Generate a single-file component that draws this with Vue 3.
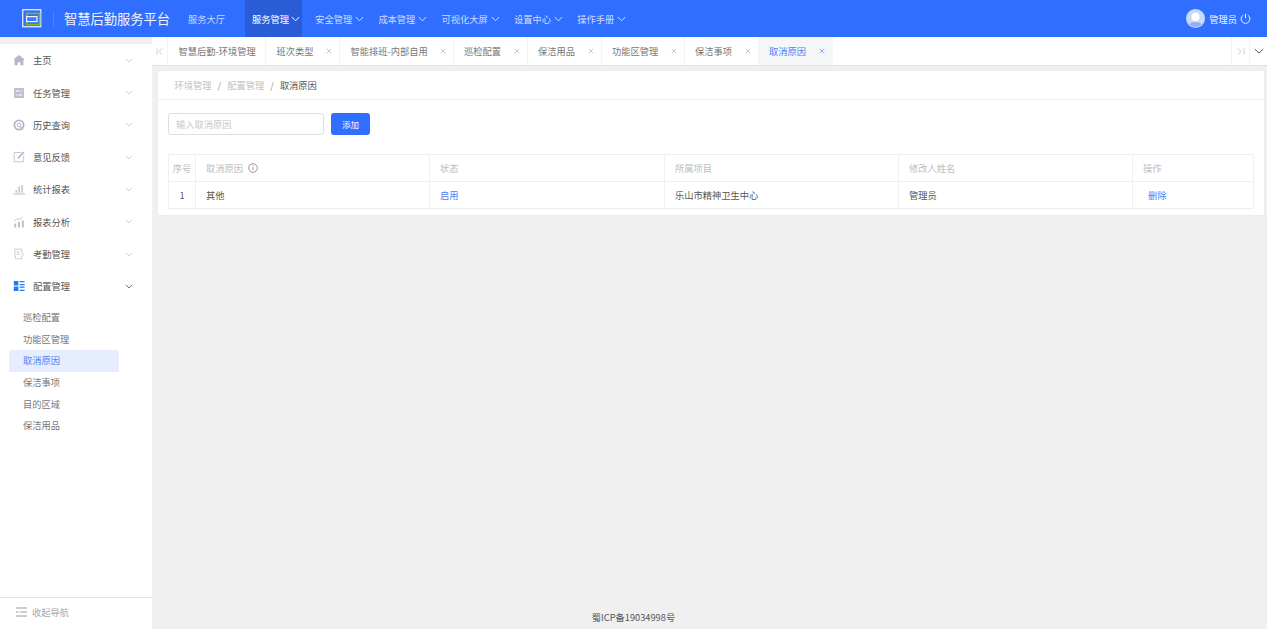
<script setup>
const navs = [
  { t: '服务管理', active: true },
  { t: '安全管理' },
  { t: '成本管理' },
  { t: '可视化大屏' },
  { t: '设置中心' },
  { t: '操作手册' }
]
const menus = [
  { t: '主页', i: 'home' },
  { t: '任务管理', i: 'task' },
  { t: '历史查询', i: 'history' },
  { t: '意见反馈', i: 'edit' },
  { t: '统计报表', i: 'stat' },
  { t: '报表分析', i: 'analysis' },
  { t: '考勤管理', i: 'attend' },
  { t: '配置管理', i: 'config', open: true }
]
const subs = ['巡检配置', '功能区管理', '取消原因', '保洁事项', '目的区域', '保洁用品']
const tabs = [
  { t: '智慧后勤-环境管理', noClose: true, w: 98 },
  { t: '班次类型', w: 74 },
  { t: '智能排班-内部自用', w: 113.5 },
  { t: '巡检配置', w: 74 },
  { t: '保洁用品', w: 74 },
  { t: '功能区管理', w: 83 },
  { t: '保洁事项', w: 74 },
  { t: '取消原因', active: true, w: 74.5 }
]
</script>

<template>
  <div class="page">
    <header class="top">
      <div class="logo">
        <svg width="20" height="20" viewBox="0 0 20 20">
          <rect x="0.7" y="0.7" width="18" height="17" fill="none" stroke="#d5e1ff" stroke-width="1.4" />
          <rect x="4.6" y="4.4" width="13" height="11.2" fill="#306eff" stroke="#7ab536" stroke-width="1.6" />
          <rect x="4.6" y="7.6" width="10.4" height="5" fill="#3f7bff" stroke="#eef3ff" stroke-width="1.2" />
        </svg>
      </div>
      <span class="logo-div"></span>
      <span class="brand">智慧后勤服务平台</span>
      <span class="hall">服务大厅</span>
      <nav class="nav">
        <div v-for="n in navs" :key="n.t" class="nav-item" :class="{ on: n.active }">
          <span>{{ n.t }}</span>
          <svg width="9" height="6" viewBox="0 0 9 6"><path d="M.8 1 4.5 4.8 8.2 1" fill="none" stroke="currentColor" stroke-width="1" /></svg>
        </div>
      </nav>
      <div class="user">
        <svg class="avatar" width="19" height="19" viewBox="0 0 19 19">
          <circle cx="9.5" cy="9.5" r="9.5" fill="#c9d9fb" />
          <circle cx="9.5" cy="8" r="4.2" fill="#fff" />
          <path d="M3 15.5c2-3.4 11-3.4 13 0a9.5 9.5 0 0 1-13 0z" fill="#8fb0f5" />
        </svg>
        <span>管理员</span>
        <svg width="11" height="11" viewBox="0 0 11 11"><path d="M3.2 2.2a4.4 4.4 0 1 0 4.6 0M5.5.8v4.4" fill="none" stroke="#e8efff" stroke-width="1" /></svg>
      </div>
    </header>
    <div class="body">
      <aside class="side">
        <div class="menu">
          <div v-for="m in menus" :key="m.t" class="m-row">
            <svg class="m-ico" width="12" height="12" viewBox="0 0 12 12">
              <path v-if="m.i === 'home'" d="M6 1 1 5v1.2l.6-.3v5.3h3V8.2h2.8v3h3V5.9l.6.3V5z" fill="#b3b7cb" />
              <g v-else-if="m.i === 'task'">
                <rect x="1" y="1" width="10" height="10" fill="#bcc0d2" />
                <path d="M2.8 4h4M8 4h1.2M5.2 8h4M2.8 8H4" stroke="#fff" stroke-width="1" />
              </g>
              <g v-else-if="m.i === 'history'">
                <circle cx="6" cy="6" r="4.6" fill="none" stroke="#b3b7cb" stroke-width="1.8" />
                <circle cx="6" cy="5.8" r="1.8" fill="none" stroke="#b3b7cb" stroke-width="1" />
                <path d="M7 7.5 10 10" stroke="#b3b7cb" stroke-width="1.2" />
              </g>
              <g v-else-if="m.i === 'edit'">
                <path d="M8.5 1.5H1.2v9.3h9.5V4.5" fill="none" stroke="#c4c7d6" stroke-width="1" />
                <path d="M4.8 7.2 11 1" stroke="#a8acc2" stroke-width="1.4" />
              </g>
              <g v-else-if="m.i === 'stat'">
                <path d="M0 11h12" stroke="#b8bcd0" stroke-width="1" />
                <path d="M2.5 7h1.6v2.8H2.5zM5.4 3.5h1.6v6.3H5.4zM8.3 2h1.6v7.8H8.3z" fill="#c2c6d6" />
              </g>
              <g v-else-if="m.i === 'analysis'">
                <path d="M1.2 7.5h2v4h-2zM5 6h2v5.5H5zM8.8 4.5h2v7h-2z" fill="#bcc0d2" />
                <path d="M1 5 4 2.6l2 1.2L9.8 1" fill="none" stroke="#c4c7d6" stroke-width=".9" />
              </g>
              <g v-else-if="m.i === 'attend'">
                <path d="M1.5 1.2h7.2v3.6l2 1.4-2 1.6v3H2.5z" fill="none" stroke="#c9ccda" stroke-width="1" />
                <path d="M3.5 4h3.4M3.5 6.3h3.4" stroke="#c9ccda" stroke-width=".9" />
              </g>
              <g v-else>
                <rect x="0.8" y="1" width="4.6" height="4.4" rx=".5" fill="#1f7cf5" />
                <rect x="0.8" y="6.6" width="4.6" height="4.4" rx=".5" fill="#1f7cf5" />
                <path d="M6.6 1.6H11.6M6.6 4.6H11.6M6.6 7.2H11.6M6.6 10.3H11.6" stroke="#1f7cf5" stroke-width="1.3" />
              </g>
            </svg>
            <span class="m-text">{{ m.t }}</span>
            <svg class="m-arrow" :class="{ open: m.open }" width="8" height="5" viewBox="0 0 9 6"><path d="M.8 1 4.5 4.8 8.2 1" fill="none" stroke="currentColor" stroke-width="1" /></svg>
          </div>
          <div class="subs">
            <div v-for="s in subs" :key="s" class="sub" :class="{ on: s === '取消原因' }">{{ s }}</div>
          </div>
        </div>
        <div class="collapse">
          <svg width="11" height="10" viewBox="0 0 11 10"><path d="M0 1h11M0 9h11M4 5h7" stroke="#9a9a9a" stroke-width="1" /><path d="M0 5h2.5" stroke="#9a9a9a" stroke-width="1" /></svg>
          <span>收起导航</span>
        </div>
      </aside>
      <main class="main">
        <div class="tabs">
          <div class="tab-btn left">
            <svg width="7" height="7" viewBox="0 0 7 7"><path d="M1 .5v6M6 .5 3 3.5l3 3" fill="none" stroke="#c4c4c4" stroke-width=".9" /></svg>
          </div>
          <div v-for="t in tabs" :key="t.t" class="tab" :class="{ on: t.active }" :style="{ width: t.w + 'px' }">
            <span>{{ t.t }}</span>
            <svg v-if="!t.noClose" class="close" width="6" height="6" viewBox="0 0 6 6"><path d="M.8.8l4.4 4.4M5.2.8.8 5.2" stroke="currentColor" stroke-width=".9" /></svg>
          </div>
          <div class="tab-spacer"></div>
          <div class="tab-btn next">
            <svg width="8" height="7" viewBox="0 0 8 7"><path d="M7 .5v6M1 .5l3 3-3 3" fill="none" stroke="#c4c4c4" stroke-width=".9" /></svg>
          </div>
          <div class="tab-btn more">
            <svg width="10" height="6" viewBox="0 0 10 6"><path d="M.8 1 5 5l4.2-4" fill="none" stroke="#555" stroke-width="1" /></svg>
          </div>
        </div>
        <div class="content">
          <section class="card">
            <div class="crumb">
              <span class="c-link">环境管理</span><i>/</i>
              <span class="c-link">配置管理</span><i>/</i>
              <span class="c-cur">取消原因</span>
            </div>
            <div class="inner">
              <div class="form">
                <div class="input">输入取消原因</div>
                <button class="btn">添加</button>
              </div>
              <div class="table">
                <div class="tr th">
                  <div class="td c0">序号</div>
                  <div class="td c1">取消原因
                    <svg class="info" width="10" height="10" viewBox="0 0 10 10"><circle cx="5" cy="5" r="4.3" fill="none" stroke="#8c8c8c" stroke-width=".9" /><path d="M5 4.2v3M5 2.4v1" stroke="#8c8c8c" stroke-width=".9" /></svg>
                  </div>
                  <div class="td c2">状态</div>
                  <div class="td c3">所属项目</div>
                  <div class="td c4">修改人姓名</div>
                  <div class="td c5">操作</div>
                </div>
                <div class="tr">
                  <div class="td c0">1</div>
                  <div class="td c1">其他</div>
                  <div class="td c2 link">启用</div>
                  <div class="td c3">乐山市精神卫生中心</div>
                  <div class="td c4">管理员</div>
                  <div class="td c5 link del">删除</div>
                </div>
              </div>
            </div>
          </section>
        </div>
        <footer class="foot">蜀ICP备19034998号</footer>
      </main>
    </div>
  </div>
</template>

<style>
html, body { margin: 0; background: #f0f0f0; }
</style>

<style scoped>
.page {
  width: 100%;
  height: 100vh;
  display: flex;
  flex-direction: column;
  overflow: hidden;
  font-family: "Noto Sans CJK SC", "Noto Sans", sans-serif;
  font-size: 9.25px;
  color: #555;
  background: #f0f0f0;
}
.top {
  height: 37px;
  flex: none;
  background: #306eff;
  display: flex;
  align-items: center;
  color: #fff;
  padding: 0 16px 0 22px;
}
.logo { width: 20px; height: 20px; }
.logo-div { width: 1px; height: 16px; margin-left: 11px; background: #4b80fb; }
.brand { margin-left: 10px; font-size: 13.25px; color: #eef3ff; width: 106px; white-space: nowrap; }
.hall { margin-left: 18px; color: #c6d7ff; }
.nav { display: flex; margin-left: 20px; height: 37px; }
.nav-item {
  display: flex;
  align-items: center;
  gap: 3px;
  padding: 0 7px;
  color: #cfdcff;
  margin-right: 0.2px;
}
.nav-item.on { background: #2a5cd8; color: #fff; gap: 2px; padding-right: 2px; margin-right: 6.2px; }
.user {
  margin-left: auto;
  display: flex;
  align-items: center;
  color: #f1f5ff;
}
.avatar { margin-right: 4px; }
.user span { margin-right: 3px; }
.body { flex: 1; display: flex; min-height: 0; }
.side {
  width: 152px;
  flex: none;
  margin-top: 7.1px;
  background: #fff;
  display: flex;
  flex-direction: column;
}
.menu { flex: 1; }
.m-row {
  height: 32.3px;
  display: flex;
  align-items: center;
  padding: 0 19px 0 13px;
  color: #555;
}
.m-ico { flex: none; }
.m-text { margin-left: 8px; flex: 1; }
.m-arrow { color: #c6c6c6; }
.m-arrow.open { color: #555; }
.subs { padding-top: 4.4px; }
.sub {
  height: 21.7px;
  line-height: 21.7px;
  margin-left: 9px;
  width: 110px;
  padding-left: 14px;
  box-sizing: border-box;
  color: #777;
  border-radius: 2px;
}
.sub.on { background: #e5edfe; color: #4c82f7; }
.collapse {
  height: 32px;
  flex: none;
  box-sizing: border-box;
  border-top: 1px solid #e4e4e4;
  padding-bottom: 3px;
  display: flex;
  align-items: center;
  padding-left: 16px;
  gap: 5px;
  color: #aaa;
}
.main { flex: 1; min-width: 0; display: flex; flex-direction: column; }
.tabs {
  height: 28px;
  flex: none;
  background: #fff;
  display: flex;
  align-items: stretch;
  border-bottom: 1px solid #e2e2e2;
  box-sizing: content-box;
}
.tab-btn { display: flex; align-items: center; justify-content: center; border-right: 1px solid #f3f3f3; box-sizing: border-box; }
.tab-btn.left { width: 16px; }
.tab-btn.next { width: 19px; border-left: 1px solid #f3f3f3; }
.tab-btn.more { width: 17px; border-right: 0; }
.tab {
  box-sizing: border-box;
  display: flex;
  align-items: center;
  justify-content: space-between;
  padding: 0 7px 0 10.6px;
  border-right: 1px solid #f3f3f3;
  color: #777;
  white-space: nowrap;
}
.close { color: #c2c2c2; }
.tab.on { background: #f5f6f7; color: #4c82f7; border-right: 0; padding-right: 8px; }
.tab.on .close { color: #7ea5f5; }
.tab-spacer { flex: 1; }
.content { flex: 1; padding: 5px 3px 0 6px; min-height: 0; }
.card { background: #fff; box-shadow: 0 0 3px rgba(0, 0, 0, .05); }
.crumb {
  height: 29px;
  box-sizing: border-box;
  border-bottom: 1px solid #efefef;
  display: flex;
  align-items: center;
  padding-left: 16.6px;
}
.crumb i { font-style: normal; margin: 0 6px; color: #999; }
.c-link { color: #c2c2c2; }
.c-cur { color: #555; }
.inner { padding: 13px 10px 6px; }
.form { display: flex; gap: 7px; height: 22px; }
.input {
  width: 156px;
  box-sizing: border-box;
  border: 1px solid #dcdfe6;
  border-radius: 3px;
  color: #c8c8c8;
  line-height: 20px;
  padding-left: 7px;
}
.btn {
  width: 39px;
  border: 0;
  padding: 0;
  border-radius: 3px;
  background: #306eff;
  color: #fff;
  font: inherit;
  font-size: 8.5px;
}
.table { margin-top: 19px; border: 1px solid #efefef; border-bottom: 0; width: 1086px; box-sizing: border-box; }
.tr { display: flex; height: 27px; border-bottom: 1px solid #efefef; box-sizing: border-box; }
.td {
  display: flex;
  align-items: center;
  box-sizing: border-box;
  padding-left: 10px;
  border-right: 1px solid #efefef;
  color: #555;
}
.th .td { color: #bdbdbd; }
.c0 { width: 27px; padding: 0; justify-content: center; }
.c1 { width: 234px; }
.c2 { width: 235px; }
.c3 { width: 234px; }
.c4 { width: 234px; }
.c5 { flex: 1; border-right: 0; }
.link { color: #4c82f7; }
.del { padding-left: 15px; }
.info { margin-left: 5px; }
.foot {
  height: 23px;
  flex: none;
  box-sizing: border-box;
  padding: 0 152px 0 0;
  text-align: center;
  line-height: 22px;
  color: #555;
}
</style>
